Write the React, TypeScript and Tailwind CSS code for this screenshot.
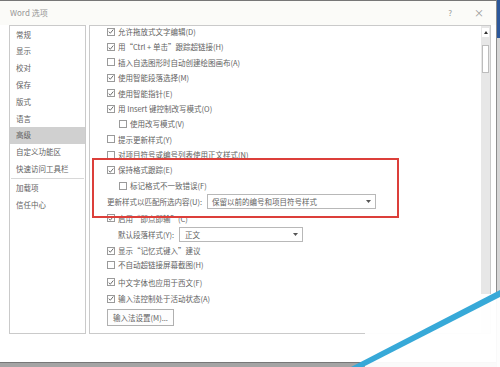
import React from 'react';

const Check = ({ on }: { on: boolean }) => (
    <span className="flex h-[8px] w-[8px] shrink-0 items-center justify-center border border-[#9a9a9a] bg-white">
        {on && (
            <svg width="7" height="7" viewBox="0 0 7 7">
                <path d="M0.8 3.6 2.7 5.5 6.2 1.2" fill="none" stroke="#555" strokeWidth="1" />
            </svg>
        )}
    </span>
);

const CheckRow = ({ text, on, indent, h }: { text: string; on: boolean; indent?: boolean; h: string }) => (
    <div className={`flex items-center gap-[3px] ${h} ${indent ? 'pl-[12px]' : ''}`}>
        <Check on={on} />
        <span className="whitespace-nowrap">{text}</span>
    </div>
);

const Arrow = () => (
    <svg width="5" height="3" viewBox="0 0 5 3">
        <path d="M0 0h5L2.5 3z" fill="#555" />
    </svg>
);

const navItems = ['常规', '显示', '校对', '保存', '版式', '语言', '高级', '自定义功能区', '快速访问工具栏'];

export default function App() {
    return (
        <div className="relative flex h-[367px] w-[500px] overflow-hidden bg-[#a4a4a4] font-['Noto_Sans_CJK_SC','Liberation_Sans',sans-serif] text-[7.5px] leading-none text-[#626262]">
            <div className="flex h-[363px] w-[496px] flex-col border-t border-b border-[#777] bg-white">
                <div className="flex h-[24px] items-center justify-between bg-[#fbfbf8] pl-[10px] pr-[12px] text-[8px] text-[#969696]">
                    <span>Word 选项</span>
                    <div className="flex items-center gap-[22px]">
                        <span>?</span>
                        <span className="text-[10px]">×</span>
                    </div>
                </div>
                <div className="flex h-[309px]">
                    <div className="ml-[9px] flex w-[77px] flex-col border border-[#cacaca]">
                        {navItems.map((t) => (
                            <div key={t} className={`flex h-[16.8px] items-center pl-[6px] ${t === '高级' ? 'bg-[#d0d0d0]' : ''}`}>
                                {t}
                            </div>
                        ))}
                        <div className="mx-[1px] my-[0.5px] h-[1px] bg-[#d8d8d8]" />
                        <div className="flex h-[16.8px] items-center pl-[6px]">加载项</div>
                        <div className="flex h-[16.8px] items-center pl-[6px]">信任中心</div>
                    </div>
                    <div className="ml-[3px] flex w-[402px] border border-[#cacaca]">
                        <div className="-mt-[2px] flex flex-1 flex-col overflow-hidden pl-[17px]">
                            <CheckRow h="h-[15.4px]" on text="允许拖放式文字编辑(D)" />
                            <CheckRow h="h-[15.4px]" on text="用“Ctrl + 单击”跟踪超链接(H)" />
                            <CheckRow h="h-[15.4px]" on={false} text="插入自选图形时自动创建绘图画布(A)" />
                            <CheckRow h="h-[15.4px]" on text="使用智能段落选择(M)" />
                            <CheckRow h="h-[15.4px]" on text="使用智能指针(E)" />
                            <CheckRow h="h-[15.4px]" on text="用 Insert 键控制改写模式(O)" />
                            <CheckRow h="h-[15.4px]" on={false} indent text="使用改写模式(V)" />
                            <CheckRow h="h-[15.4px]" on={false} text="提示更新样式(Y)" />
                            <CheckRow h="h-[15.4px]" on={false} text="对项目符号或编号列表使用正文样式(N)" />
                            <CheckRow h="h-[15.4px]" on text="保持格式跟踪(E)" />
                            <CheckRow h="h-[15.4px]" on={false} indent text="标记格式不一致错误(F)" />
                            <div className="flex h-[17px] items-center">
                                <span className="w-[100px] whitespace-nowrap">更新样式以匹配所选内容(U):</span>
                                <div className="flex h-[15px] w-[169px] items-center justify-between border border-[#b8b8b8] bg-white pl-[4px] pr-[4px]">
                                    <span className="whitespace-nowrap">保留以前的编号和项目符号样式</span>
                                    <Arrow />
                                </div>
                            </div>
                            <CheckRow h="h-[16px]" on text="启用“即点即输”(C)" />
                            <div className="flex h-[17px] items-center pl-[11px]">
                                <span className="w-[61px] whitespace-nowrap">默认段落样式(Y):</span>
                                <div className="flex h-[15px] w-[124px] items-center justify-between border border-[#b8b8b8] bg-white pl-[5px] pr-[4px]">
                                    <span>正文</span>
                                    <Arrow />
                                </div>
                            </div>
                            <CheckRow h="h-[14.6px]" on text="显示“记忆式键入”建议" />
                            <CheckRow h="h-[14.6px]" on={false} text="不自动超链接屏幕截图(H)" />
                            <div className="mt-[2px]">
                                <CheckRow h="h-[16px]" on text="中文字体也应用于西文(F)" />
                            </div>
                            <CheckRow h="h-[17px]" on text="输入法控制处于活动状态(A)" />
                            <div className="mt-[2px] flex h-[17px] w-[67px] items-center justify-center border border-[#b0b0b0] bg-[#fdfdfd]">
                                输入法设置(M)...
                            </div>
                        </div>
                        <div className="flex w-[9px] flex-col bg-[#e7e7e7]">
                            <div className="mx-[1px] mt-[2px] flex h-[9px] items-center justify-center bg-white">
                                <svg width="4" height="3" viewBox="0 0 4 3">
                                    <path d="M0 3h4L2 0z" fill="#333" />
                                </svg>
                            </div>
                            <div className="mx-[1px] mt-[8px] h-[28px] border border-[#bdbdbd] bg-white" />
                        </div>
                    </div>
                </div>
                <div className="flex-1 bg-white" />
            </div>
            <div className="flex w-[4px] flex-col border-l border-[#8c8c8c]">
                <div className="h-[38px] bg-[#2b579a]" />
                <div className="flex-1 bg-[#d6d6d6]" />
            </div>
            <div className="absolute left-[92px] top-[158px] h-[60px] w-[307px] border-2 border-[#dc3f3a]" />
            <svg className="pointer-events-none absolute left-0 top-0" width="500" height="367" viewBox="0 0 500 367">
                <rect x="365" y="294" width="135" height="73" fill="#ffffff" opacity="0.95" />
                <polygon points="351,367 500,290 500,297 363,367" fill="#37a9d8" />
            </svg>
        </div>
    );
}
